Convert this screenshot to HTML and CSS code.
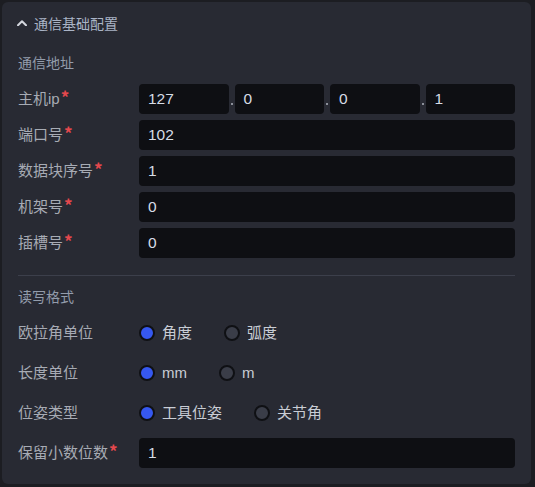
FILE: index.html
```html
<!DOCTYPE html>
<html lang="zh-CN">
<head>
<meta charset="utf-8">
<title>通信基础配置</title>
<link rel="stylesheet" href="styles.css">
</head>
<body>
<div class="panel">
  <div class="panel-header">
    <svg class="chevron" width="10" height="6" viewBox="0 0 10 6"><polyline points="1,5.2 5,1.2 9,5.2" fill="none" stroke="#d4d7de" stroke-width="2" stroke-linecap="round" stroke-linejoin="round"/></svg>
    <span class="panel-title">通信基础配置</span>
  </div>
  <div class="panel-body">
    <div class="section-title">通信地址</div>
    <div class="rows">
      <div class="row">
        <div class="label">主机ip<span class="req">*</span></div>
        <div class="ip-group">
          <div class="input">127</div><span class="ip-dot"></span>
          <div class="input">0</div><span class="ip-dot"></span>
          <div class="input">0</div><span class="ip-dot"></span>
          <div class="input">1</div>
        </div>
      </div>
      <div class="row">
        <div class="label">端口号<span class="req">*</span></div>
        <div class="input">102</div>
      </div>
      <div class="row">
        <div class="label">数据块序号<span class="req">*</span></div>
        <div class="input">1</div>
      </div>
      <div class="row">
        <div class="label">机架号<span class="req">*</span></div>
        <div class="input">0</div>
      </div>
      <div class="row">
        <div class="label">插槽号<span class="req">*</span></div>
        <div class="input">0</div>
      </div>
    </div>
    <div class="divider"></div>
    <div class="section-title section-title-2">读写格式</div>
    <div class="items">
      <div class="item">
        <div class="label">欧拉角单位</div>
        <div class="radios">
          <span class="radio checked"><span class="dot"></span>角度</span>
          <span class="radio"><span class="dot"></span>弧度</span>
        </div>
      </div>
      <div class="item">
        <div class="label">长度单位</div>
        <div class="radios">
          <span class="radio checked"><span class="dot"></span>mm</span>
          <span class="radio"><span class="dot"></span>m</span>
        </div>
      </div>
      <div class="item">
        <div class="label">位姿类型</div>
        <div class="radios">
          <span class="radio checked"><span class="dot"></span>工具位姿</span>
          <span class="radio"><span class="dot"></span>关节角</span>
        </div>
      </div>
      <div class="item">
        <div class="label">保留小数位数<span class="req">*</span></div>
        <div class="input">1</div>
      </div>
    </div>
  </div>
</div>
</body>
</html>
```

FILE: styles.css
```css
* { box-sizing: border-box; }
html, body { margin: 0; padding: 0; }
body {
  background: #1c1d22;
  font-family: "Liberation Sans", "Noto Sans CJK SC", sans-serif;
  width: 535px;
  height: 487px;
  padding: 2px 4px 3px 2px;
}
.panel {
  background: #282a33;
  border-radius: 6px;
  height: 482px;
  width: 529px;
}
.panel-header {
  height: 43px;
  display: flex;
  align-items: center;
  padding-left: 15px;
  gap: 7px;
}
.chevron { display: block; margin-top: -1px; }
.panel-title {
  font-size: 14px;
  color: #aab4c6;
  line-height: 20px;
}
.panel-body { padding: 0 16px; }
.section-title {
  font-size: 14px;
  line-height: 20px;
  color: #939cab;
  margin-top: 8px;
  margin-bottom: 11px;
}
.section-title-2 { margin-top: 11px; margin-bottom: 10px; }
.rows { display: flex; flex-direction: column; gap: 6px; }
.row { display: flex; align-items: center; height: 30px; }
.label {
  width: 121px;
  flex: none;
  font-size: 15px;
  color: #a7abb4;
  line-height: 20px;
  white-space: nowrap;
}
.req {
  color: #e5484d;
  font-family: "Noto Sans CJK SC", sans-serif;
  font-size: 17px;
  font-weight: 700;
  line-height: 0;
  margin-left: 1px;
}
.input {
  flex: 1;
  height: 30px;
  background: #0e0f13;
  border-radius: 4px;
  font-size: 15.5px;
  line-height: 30px;
  color: #d6dce6;
  padding-left: 9px;
}
.ip-group { flex: 1; display: flex; align-items: center; }
.ip-group .input { flex: 1; }
.ip-dot {
  width: 6px;
  height: 30px;
  flex: none;
  position: relative;
}
.ip-dot::after {
  content: "";
  position: absolute;
  left: 2px;
  top: 19px;
  width: 2px;
  height: 2px;
  background: #8c909a;
}
.divider {
  height: 1px;
  background: #3c3f4b;
  margin-top: 17px;
}
.items { display: flex; flex-direction: column; gap: 8px; }
.item { display: flex; align-items: center; height: 32px; }
.radios { display: flex; align-items: center; gap: 32px; }
.radio {
  display: flex;
  align-items: center;
  gap: 7px;
  font-size: 15px;
  color: #c9cdd5;
  line-height: 20px;
}
.dot {
  width: 16px;
  height: 16px;
  border-radius: 50%;
  border: 2px solid #0f1014;
  background: #3a3d48;
  flex: none;
}
.radio.checked .dot { background: #3658f0; }
```
